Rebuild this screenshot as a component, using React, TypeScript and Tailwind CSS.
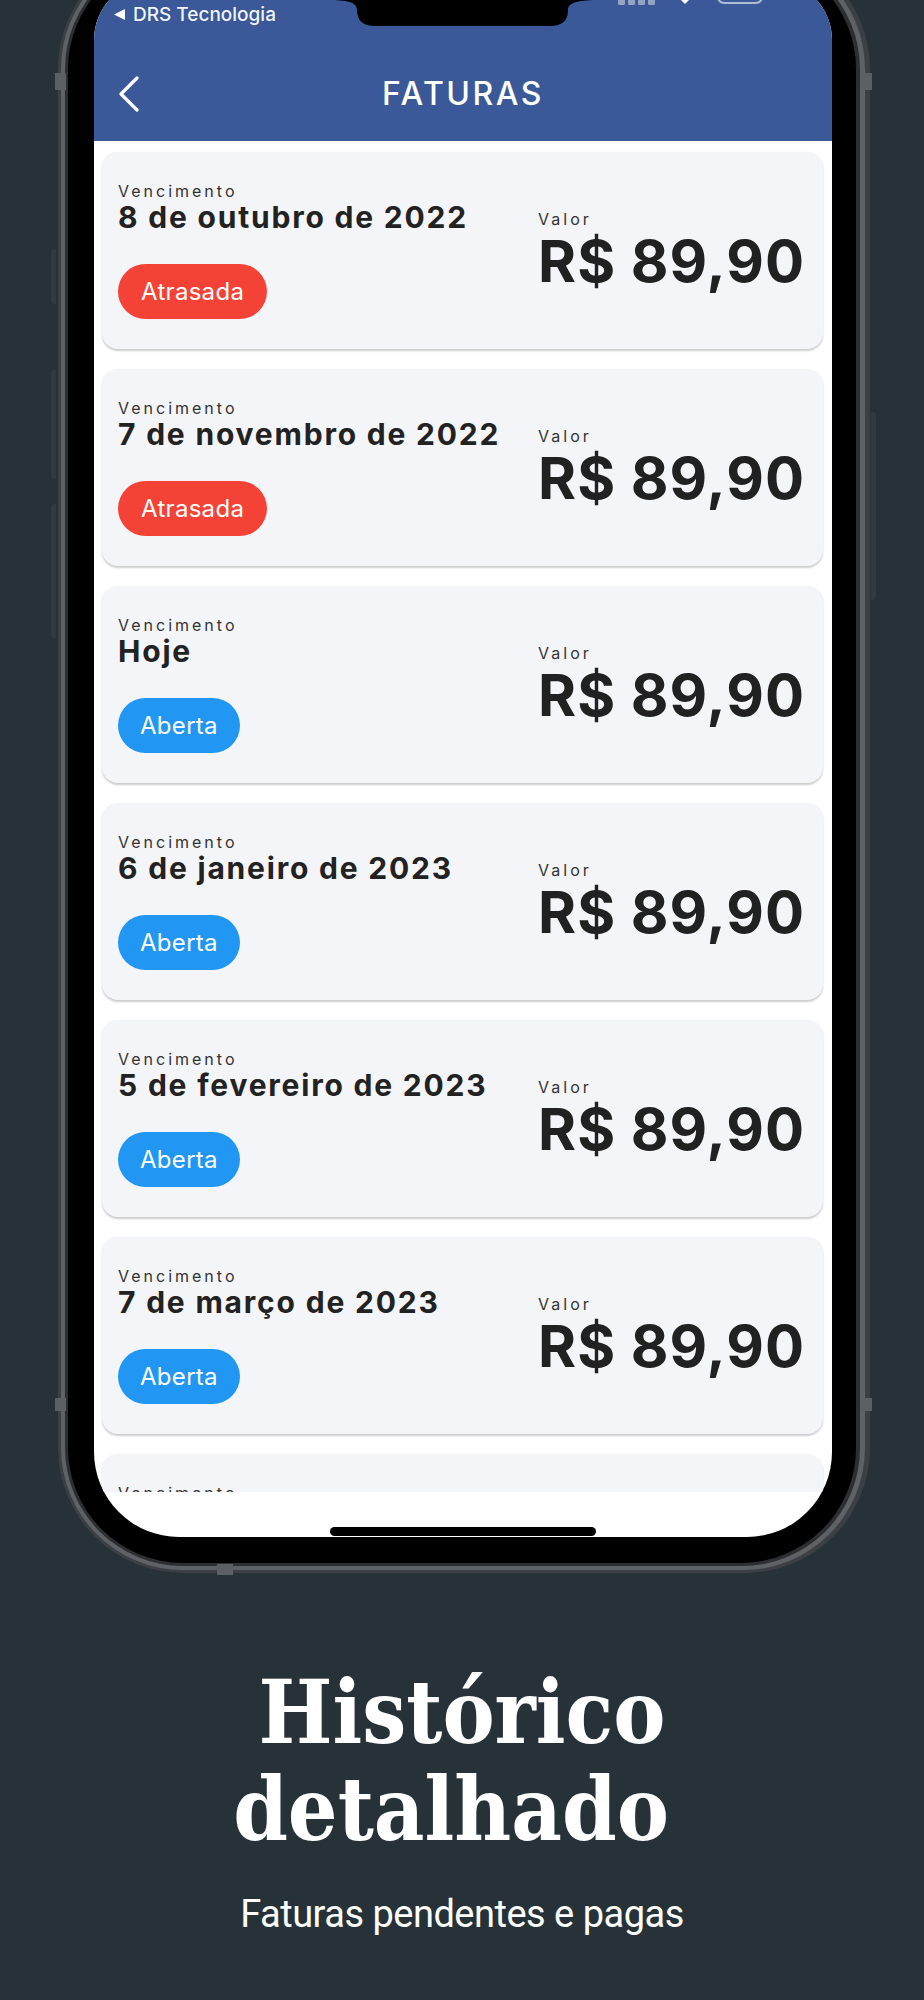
const invoices = [
  { date: '8 de outubro de 2022', status: 'Atrasada' },
  { date: '7 de novembro de 2022', status: 'Atrasada' },
  { date: 'Hoje', status: 'Aberta' },
  { date: '6 de janeiro de 2023', status: 'Aberta' },
  { date: '5 de fevereiro de 2023', status: 'Aberta' },
  { date: '7 de março de 2023', status: 'Aberta' },
  { date: '6 de abril de 2023', status: 'Aberta' },
]

function InvoiceCard({ date, status }: { date: string; status: string }) {
  const late = status === 'Atrasada'
  return (
    <div className="h-[197px] shrink-0 rounded-2xl bg-[#f4f5f9] shadow-[0_1.5px_2px_rgba(0,0,0,0.2)] flex items-center justify-between pl-[16px] pr-[18px]">
      <div className="flex flex-col items-start">
        <span className="text-[16px] leading-[18px] tracking-[3px] text-[#333]">Vencimento</span>
        <span className="text-[30px] leading-[34px] font-bold tracking-[1.8px] text-[#222]">{date}</span>
        <span
          className={
            late
              ? 'mt-[30px] h-[55px] px-[23px] rounded-full flex items-center text-[24px] tracking-[0.3px] text-white bg-[#f44336]'
              : 'mt-[30px] h-[55px] px-[22px] rounded-full flex items-center text-[24px] tracking-[0.3px] text-white bg-[#2196f3]'
          }
        >
          {status}
        </span>
      </div>
      <div className="flex flex-col items-start">
        <span className="text-[16px] leading-[18px] tracking-[3px] text-[#333]">Valor</span>
        <span className="mt-[3px] text-[58px] leading-[60px] font-bold tracking-[1px] text-[#212121]">R$ 89,90</span>
      </div>
    </div>
  )
}

function StatusIcons() {
  // only the bottom few pixels of these show: the phone top is cropped
  return (
    <svg width="150" height="25" viewBox="0 0 150 25" className="mr-[67px] self-start">
      <g fill="#ffffff" fillOpacity="0.45">
        <rect x="3" y="15" width="7" height="10" rx="1.5" />
        <rect x="13" y="12" width="7" height="13" rx="1.5" />
        <rect x="23" y="9" width="7" height="16" rx="1.5" />
        <rect x="33" y="6" width="7" height="19" rx="1.5" />
      </g>
      <path d="M70 24 L57 11 A18 18 0 0 1 83 11 Z" fill="#ffffff" />
      <rect x="103" y="-4" width="44" height="27" rx="6" fill="none" stroke="#ffffff" strokeOpacity="0.6" strokeWidth="2" />
      <rect x="107" y="-2" width="36" height="21" rx="3" fill="#ffffff" />
    </svg>
  )
}

function Notch() {
  return (
    <svg
      width="273"
      height="46"
      viewBox="0 0 273 46"
      className="absolute top-0 left-[233px]"
    >
      <path
        d="M0 0 H273 V20 C253 20 241 22 241 30 Q241 46 223 46 H48 Q30 46 30 30 C30 22 20 20 0 20 Z"
        fill="#000"
      />
    </svg>
  )
}

function PhoneScreen() {
  return (
    <div className="relative w-[738px] rounded-t-[60px] rounded-b-[85px] overflow-hidden bg-white flex flex-col">
      <header className="h-[161px] bg-[#3b5998] flex flex-col">
        <div className="h-[46px] flex justify-between">
          <div className="self-end flex items-center gap-[8px] pl-[20px] font-['Inter',sans-serif] text-[19px] leading-[23px] font-medium text-white/95">
            <svg width="11" height="11" viewBox="0 0 11 11">
              <path d="M11 0 V11 L0 5.5 Z" fill="#ffffff" />
            </svg>
            <span>DRS Tecnologia</span>
          </div>
          <StatusIcons />
        </div>
        <div className="relative h-[115px] pt-[20px] flex items-center justify-center">
          <svg width="22" height="36" viewBox="0 0 22 36" className="absolute left-[24px] top-[50px]">
            <path d="M19 2 L3 18 L19 34" fill="none" stroke="#ffffff" strokeWidth="3.2" strokeLinecap="round" strokeLinejoin="round" />
          </svg>
          <h1 className="font-['Inter',sans-serif] text-[32px] font-medium tracking-[2.5px] text-white">FATURAS</h1>
        </div>
      </header>
      <Notch />
      <div className="h-[1351px] overflow-hidden flex flex-col gap-[20px] pt-[11px] pl-[8px] pr-[9px] font-['Inter',sans-serif]">
        {invoices.map((inv, i) => (
          <InvoiceCard key={i} date={inv.date} status={inv.status} />
        ))}
      </div>
      <div className="h-[45px] flex items-end justify-center pb-[1px]">
        <div className="w-[266px] h-[9px] rounded-full bg-black" />
      </div>
    </div>
  )
}

function Phone() {
  return (
    <div className="relative ml-[58px] self-start mt-[-56px] rounded-[125px] bg-[#3c3f43] p-[3px] pr-[5px]">
      {/* side buttons and antenna bands */}
      <div className="absolute left-[-7px] top-[305px] w-[5px] h-[55px] rounded-l-sm bg-[#333a3f]" />
      <div className="absolute left-[-7px] top-[426px] w-[5px] h-[109px] rounded-l-sm bg-[#333a3f]" />
      <div className="absolute left-[-7px] top-[560px] w-[5px] h-[134px] rounded-l-sm bg-[#333a3f]" />
      <div className="absolute right-[-6px] top-[468px] w-[5px] h-[188px] rounded-r-sm bg-[#333a3f]" />
      <div className="absolute left-[-3px] top-[129px] w-[11px] h-[17px] bg-[#5c5f63]" />
      <div className="absolute right-[-2px] top-[129px] w-[11px] h-[17px] bg-[#5c5f63]" />
      <div className="absolute left-[-3px] top-[1454px] w-[11px] h-[13px] bg-[#5c5f63]" />
      <div className="absolute right-[-2px] top-[1454px] w-[11px] h-[13px] bg-[#5c5f63]" />
      <div className="absolute left-[159px] bottom-[-2px] w-[16px] h-[11px] bg-[#5c5f63]" />
      <div className="rounded-[122px] bg-[#5e6165] p-[4px] pr-[5px]">
        <div className="rounded-[118px] bg-[#2c2e31] p-[3px] pr-[4px]">
          <div className="rounded-[115px] bg-black pt-[26px] pb-[26px] pl-[26px] pr-[24px]">
            <PhoneScreen />
          </div>
        </div>
      </div>
    </div>
  )
}

export default function App() {
  return (
    <div className="w-[924px] h-[2000px] overflow-hidden bg-[#263238] flex flex-col items-center">
      <Phone />
      <h2 className="mt-[91px] flex flex-col items-center font-['DejaVu_Serif',serif] font-bold [font-stretch:condensed] text-[87px] leading-[97px] text-white">
        <span>Histórico</span>
        <span className="pr-[22px]">detalhado</span>
      </h2>
      <p className="mt-[34px] font-['Roboto',sans-serif] text-[38px] leading-[44px] tracking-[-0.5px] text-white">
        Faturas pendentes e pagas
      </p>
    </div>
  )
}
